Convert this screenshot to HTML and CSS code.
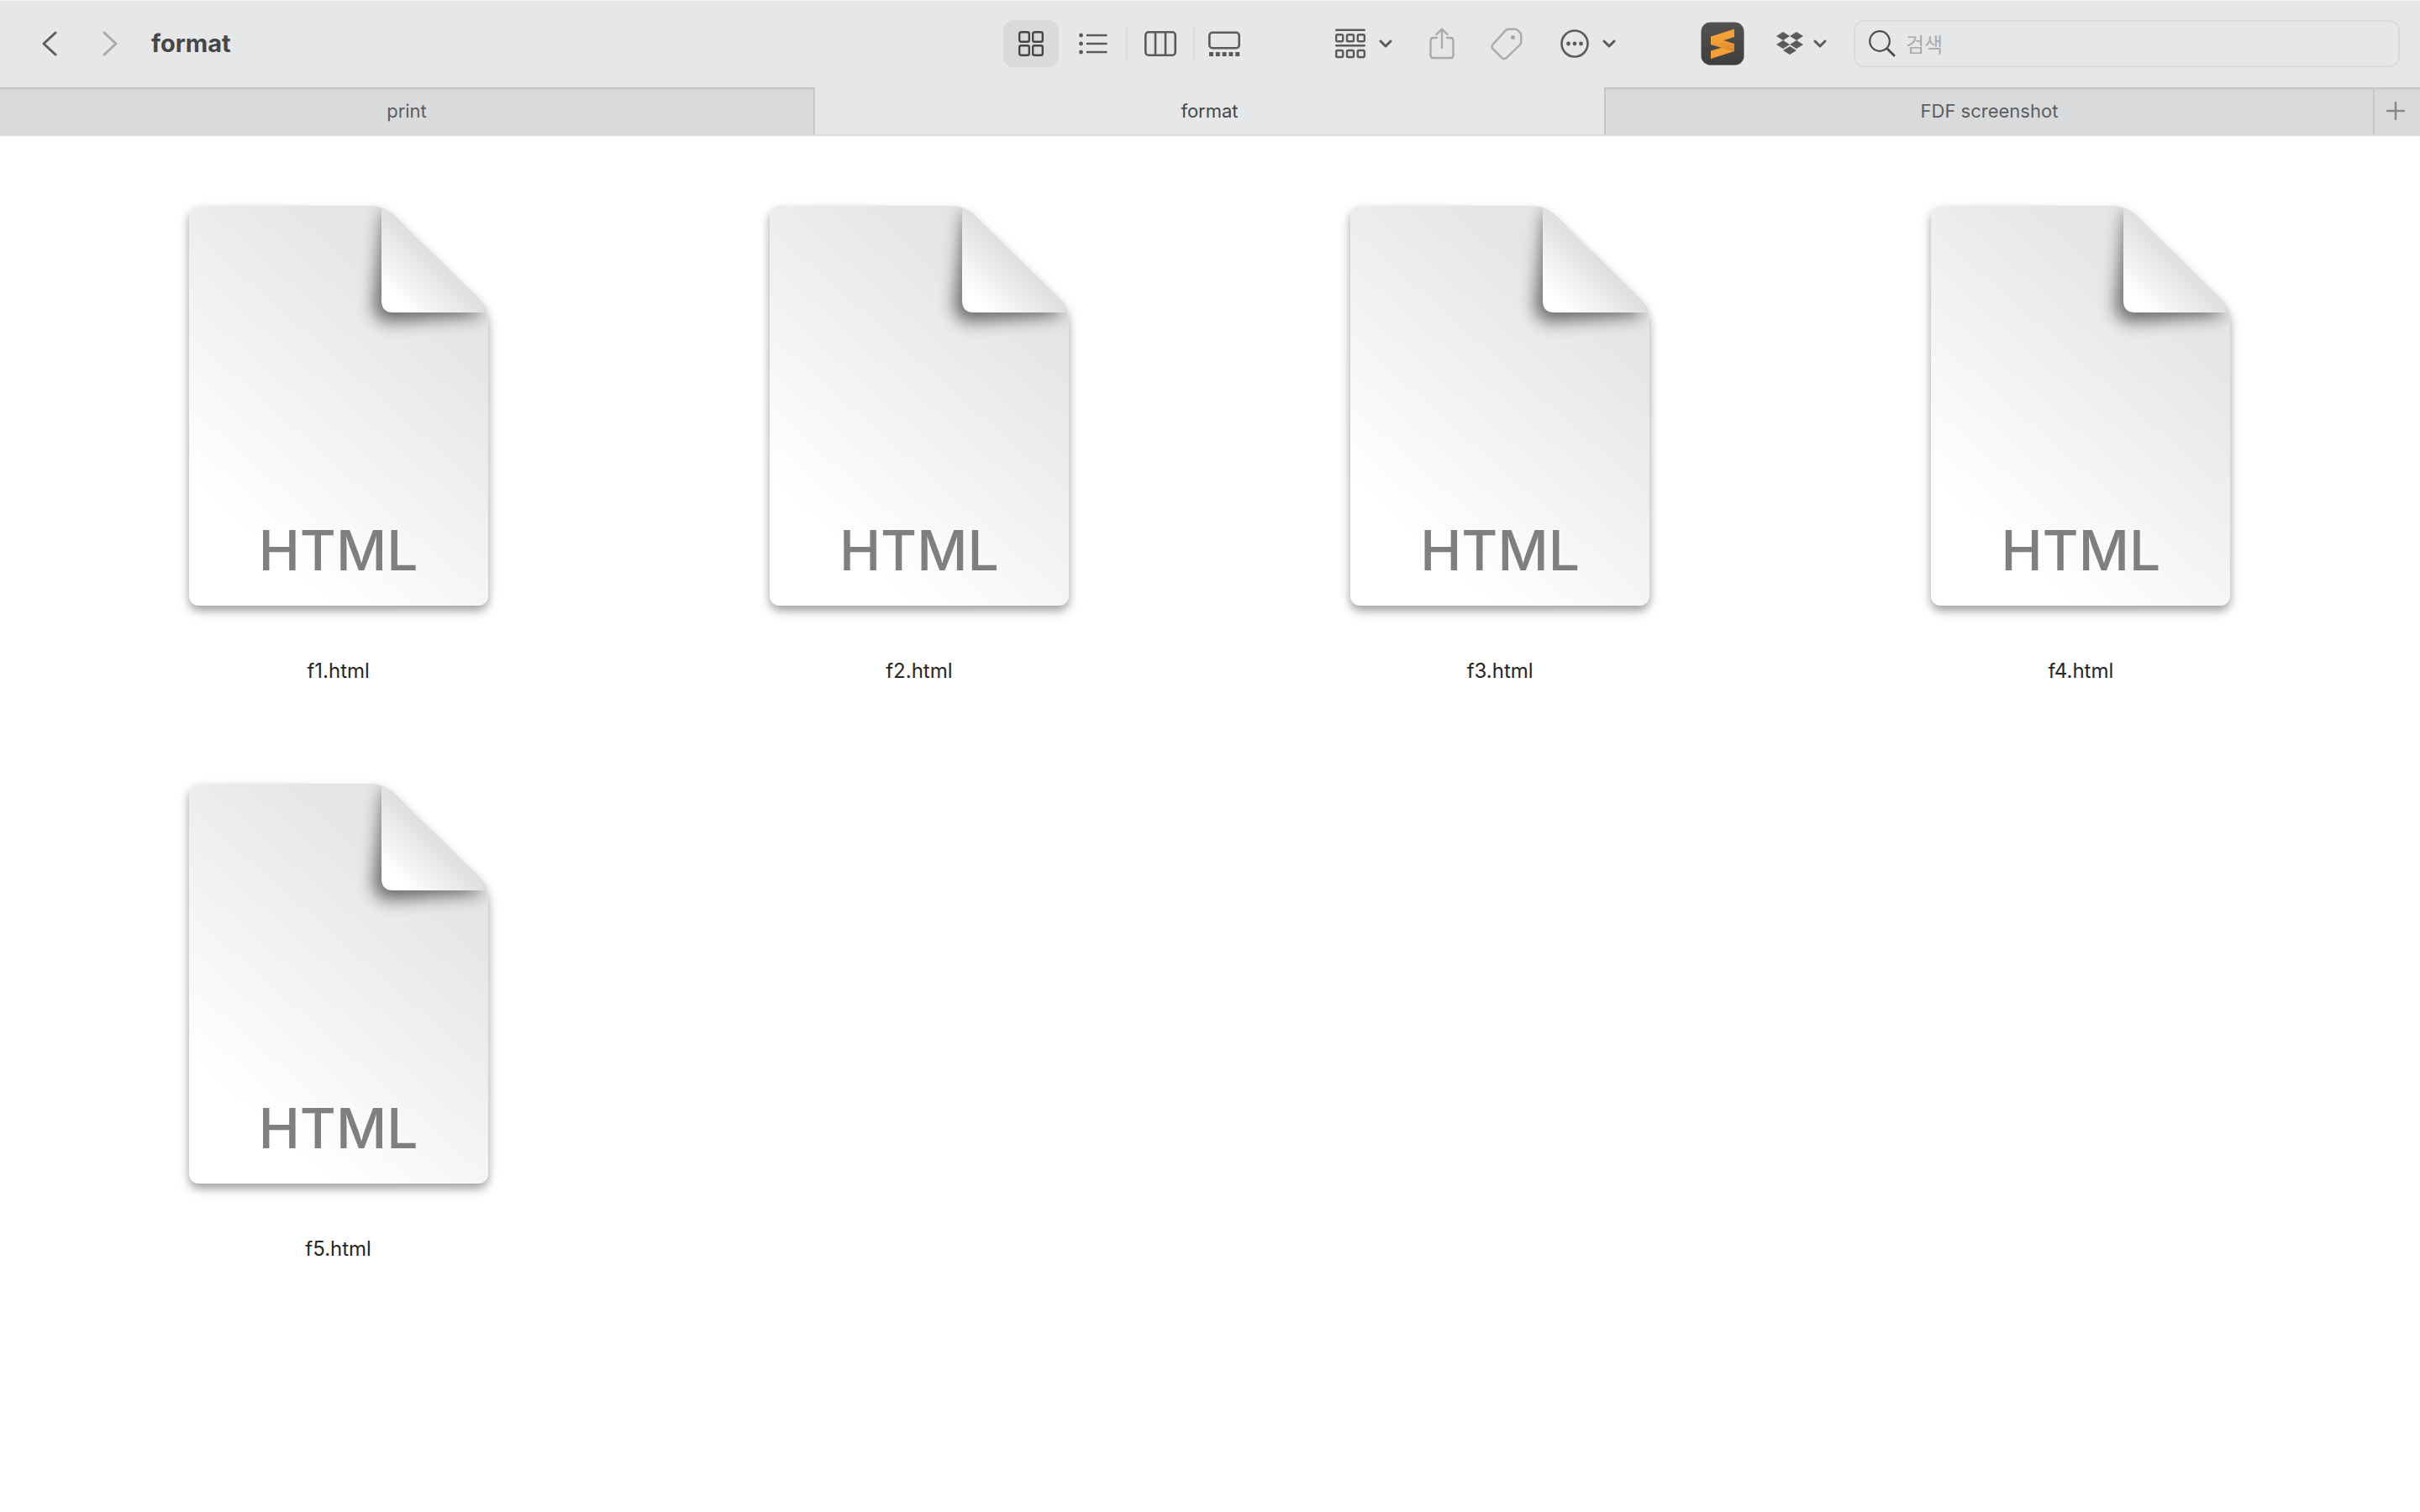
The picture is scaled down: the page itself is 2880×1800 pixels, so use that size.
FILE: index.html
```html
<!DOCTYPE html>
<html lang="ko">
<head>
<meta charset="utf-8">
<title>format</title>
<link rel="stylesheet" href="styles.css">
</head>
<body>
<svg class="defs" aria-hidden="true">
  <defs>
    <linearGradient id="paper" gradientUnits="userSpaceOnUse" x1="60" y1="380" x2="290" y2="120">
      <stop offset="0" stop-color="#fff"/><stop offset="1" stop-color="#e5e5e5"/>
    </linearGradient>
    <linearGradient id="flap" gradientUnits="userSpaceOnUse" x1="245" y1="111" x2="291" y2="65">
      <stop offset="0" stop-color="#fff"/><stop offset="1" stop-color="#e0e0e0"/>
    </linearGradient>
    <filter id="drop" filterUnits="userSpaceOnUse" x="-24" y="-24" width="404" height="540">
      <feDropShadow dx="0" dy="6" stdDeviation="6" flood-color="#000" flood-opacity=".38"/>
    </filter>
    <filter id="soft" filterUnits="userSpaceOnUse" x="150" y="-60" width="280" height="280">
      <feGaussianBlur stdDeviation="10"/>
    </filter>
    <clipPath id="sheet"><path d="M14 0H216Q230 0 241 9L345 111Q356 121 356 138V462Q356 476 342 476H14Q0 476 0 462V14Q0 0 14 0Z"/></clipPath>
    <symbol id="file" viewBox="-24 -24 404 540">
      <path filter="url(#drop)" fill="url(#paper)" d="M14 0H216Q230 0 241 9L345 111Q356 121 356 138V462Q356 476 342 476H14Q0 476 0 462V14Q0 0 14 0Z"/>
      <g clip-path="url(#sheet)">
        <path d="M232 2L220 118Q220 138 240 138L352 130Z" fill="#000" opacity=".55" filter="url(#soft)"/>
        <path d="M229 2Q236 4 241 9L345 111Q351 117 353 127H243Q229 127 229 113Z" fill="url(#flap)"/>
      </g>
    </symbol>
    <symbol id="chevron" viewBox="0 0 16 10"><path d="M2 2L8 8L14 2" fill="none" stroke="currentColor" stroke-width="3" stroke-linecap="round" stroke-linejoin="round"/></symbol>
  </defs>
</svg>

<header class="toolbar">
  <nav class="history">
    <button class="tool" aria-label="뒤로"><svg width="18" height="30" viewBox="0 0 18 30"><path d="M16 2L2 15L16 28" fill="none" stroke="currentColor" stroke-width="3" stroke-linecap="round" stroke-linejoin="round"/></svg></button>
    <button class="tool dim" aria-label="앞으로"><svg width="18" height="30" viewBox="0 0 18 30"><path d="M2 2L16 15L2 28" fill="none" stroke="currentColor" stroke-width="3" stroke-linecap="round" stroke-linejoin="round"/></svg></button>
    <h1 class="title">format</h1>
  </nav>

  <div class="views">
    <button class="tool view selected" aria-label="아이콘"><svg width="32" height="32" viewBox="0 0 32 32" fill="none" stroke="currentColor" stroke-width="2.4"><rect x="2.2" y="2.2" width="11.6" height="11.6" rx="2"/><rect x="18.2" y="2.2" width="11.6" height="11.6" rx="2"/><rect x="2.2" y="18.2" width="11.6" height="11.6" rx="2"/><rect x="18.2" y="18.2" width="11.6" height="11.6" rx="2"/></svg></button>
    <button class="tool view" aria-label="목록"><svg width="34" height="26" viewBox="0 0 34 26" fill="currentColor"><circle cx="2.5" cy="3" r="2.4"/><circle cx="2.5" cy="13" r="2.4"/><circle cx="2.5" cy="23" r="2.4"/><path d="M10 3H32.5M10 13H32.5M10 23H32.5" stroke="currentColor" stroke-width="2.6" stroke-linecap="round"/></svg></button>
    <span class="rule"></span>
    <button class="tool view" aria-label="계층"><svg width="40" height="32" viewBox="0 0 40 32" fill="none" stroke="currentColor" stroke-width="2.6"><rect x="2.3" y="2.3" width="35.4" height="27.4" rx="3.5"/><path d="M14 2V30M26 2V30"/></svg></button>
    <span class="rule"></span>
    <button class="tool view narrow" aria-label="갤러리"><svg width="38" height="30" viewBox="0 0 38 30"><rect x="1.3" y="1.8" width="35.4" height="18.4" rx="3.5" fill="none" stroke="currentColor" stroke-width="2.6"/><path d="M1 27.5H37.200" stroke="currentColor" stroke-width="5" stroke-dasharray="5 2.8"/></svg></button>
  </div>

  <div class="actions">
    <button class="tool" aria-label="그룹"><svg width="36" height="36" viewBox="0 0 36 36" fill="none" stroke="currentColor" stroke-width="2.4"><path d="M1.2 1.7H34.8M1.2 20.3H34.8" stroke-linecap="round"/><rect x="1.2" y="7.2" width="8" height="8" rx="1.5"/><rect x="14" y="7.2" width="8" height="8" rx="1.5"/><rect x="26.8" y="7.2" width="8" height="8" rx="1.5"/><rect x="1.2" y="26" width="8" height="8" rx="1.5"/><rect x="14" y="26" width="8" height="8" rx="1.5"/><rect x="26.8" y="26" width="8" height="8" rx="1.5"/></svg><svg width="16" height="10"><use href="#chevron"/></svg></button>
    <button class="tool dim" aria-label="공유"><svg width="30" height="38" viewBox="0 0 30 38" fill="none" stroke="currentColor" stroke-width="2.4" stroke-linecap="round" stroke-linejoin="round"><path d="M9 12H5Q1.5 12 1.5 15.5V32.5Q1.5 36 5 36H25Q28.5 36 28.5 32.5V15.5Q28.5 12 25 12H21M15 24V2M8.500 8L15 1.5L21.5 8"/></svg></button>
    <button class="tool dim" aria-label="태그"><svg class="tag" width="38" height="38" viewBox="1 0 38 38"><path d="M20.500 1.700H29Q31 1.700 32.500 3.200L35 5.800Q36.300 7.200 36.300 9V17Q36.300 19 34.800 20.500L18.500 36Q16 38 13.500 36L2.500 25Q0.500 22.500 2.500 20L18 3Q19 1.700 20.500 1.700Z" fill="none" stroke="currentColor" stroke-width="2.4"/><circle cx="26.5" cy="11.5" r="2.5" fill="currentColor"/></svg></button>
    <button class="tool" aria-label="동작"><svg width="34" height="34" viewBox="0 0 34 34"><circle cx="17" cy="17" r="15.5" fill="none" stroke="currentColor" stroke-width="2.6"/><g fill="currentColor"><circle cx="9.5" cy="17" r="2.4"/><circle cx="17" cy="17" r="2.4"/><circle cx="24.5" cy="17" r="2.4"/></g></svg><svg width="16" height="10"><use href="#chevron"/></svg></button>
  </div>

  <div class="apps">
    <button class="tool" aria-label="Sublime Text"><svg width="52" height="52" viewBox="0 0 52 52"><defs><linearGradient id="dark" x2="0" y2="1"><stop stop-color="#525252"/><stop offset="1" stop-color="#3e3e3e"/></linearGradient><linearGradient id="fold" x1="0" y1="0" x2=".3" y2="1"><stop offset=".4" stop-color="#f59d35"/><stop offset="1" stop-color="#e08a2b"/></linearGradient></defs><rect x=".5" y=".5" width="51" height="51" rx="11" fill="url(#dark)"/><path d="M12 34.500L40 26V35L12 44Z" fill="#f3a038"/><path d="M12 17.500V27L40 35.500V26Z" fill="url(#fold)"/><path d="M12 17.500L40 8.500V18L12 27Z" fill="#f3a038"/></svg></button>
    <button class="tool" aria-label="Dropbox"><svg width="32" height="28" viewBox="0 0 32 28" fill="currentColor"><path d="M8 0L16 5L8 10L0 5ZM24 0L32 5L24 10L16 5ZM8 10L16 15L8 20L0 15ZM24 10L32 15L24 20L16 15ZM16 17L24 22L16 27L8 22Z"/></svg><svg width="16" height="10"><use href="#chevron"/></svg></button>
  </div>

  <label class="search">
    <svg width="32" height="32" viewBox="0 0 32 32" fill="none" stroke="currentColor" stroke-linecap="round"><circle cx="13" cy="13" r="11.8" stroke-width="2.2"/><path d="M22 22L30 30" stroke-width="3"/></svg>
    <input type="search" placeholder="검색" aria-label="검색">
  </label>
</header>

<nav class="tabs">
  <button class="tab first">print</button>
  <button class="tab active">format</button>
  <button class="tab last">FDF screenshot</button>
  <button class="add" aria-label="새로운 탭"><svg width="22" height="22" viewBox="0 0 22 22"><path d="M11 1V21M1 11H21" stroke="currentColor" stroke-width="2.4" stroke-linecap="round"/></svg></button>
</nav>

<main class="files">
  <figure class="file"><div class="page"><svg class="sheet" width="404" height="540"><use href="#file"/></svg><span class="kind">HTML</span></div><figcaption>f1.html</figcaption></figure>
  <figure class="file"><div class="page"><svg class="sheet" width="404" height="540"><use href="#file"/></svg><span class="kind">HTML</span></div><figcaption>f2.html</figcaption></figure>
  <figure class="file"><div class="page"><svg class="sheet" width="404" height="540"><use href="#file"/></svg><span class="kind">HTML</span></div><figcaption>f3.html</figcaption></figure>
  <figure class="file"><div class="page"><svg class="sheet" width="404" height="540"><use href="#file"/></svg><span class="kind">HTML</span></div><figcaption>f4.html</figcaption></figure>
  <figure class="file"><div class="page"><svg class="sheet" width="404" height="540"><use href="#file"/></svg><span class="kind">HTML</span></div><figcaption>f5.html</figcaption></figure>
</main>
</body>
</html>
```
FILE: styles.css
```css
* { box-sizing: border-box; }

body {
  margin: 0;
  background: #fff;
  color: #262626;
  font-family: Inter, "Noto Sans CJK KR", sans-serif;
}

svg { display: block; flex: none; }
.defs { position: absolute; width: 0; height: 0; }

button {
  margin: 0;
  padding: 0;
  border: 0;
  background: none;
  font: inherit;
  color: inherit;
}

.toolbar {
  display: grid;
  grid-template-columns: 1194px 395px auto auto 1fr;
  align-items: center;
  height: 104px;
  padding: 0 24px 2px 0;
  border-top: 1px solid #f4f5f5;
  background: #e6e7e9;
  color: #5a5b5d;
}

.tool { display: flex; align-items: center; gap: 16px; }
.dim { color: #a9aaac; }
.tag { overflow: visible; }

.history { display: flex; align-items: center; padding-left: 50px; gap: 54px; }
.title { margin: 0 0 0 -14px; font-size: 29px; line-height: 40px; font-weight: 700; color: #454647; }

.views { display: flex; align-items: center; }
.view { justify-content: center; width: 66px; height: 56px; border-radius: 12px; }
.view + .view { margin-left: 8px; }
.narrow { width: 58px; }
.selected { background: #d9dadc; color: #454647; }
.rule { width: 2px; height: 40px; margin: 0 6px; background: #d9dadc; }

.actions { display: flex; align-items: center; gap: 44px; }
.apps { display: flex; align-items: center; gap: 38px; margin-left: 101px; }
.apps .tool { gap: 12px; }

.search {
  display: flex;
  align-items: center;
  gap: 12px;
  height: 56px;
  margin-left: 32px;
  padding: 0 16px;
  border: 2px solid #d9dadc;
  border-radius: 12px;
  color: #4d4e50;
}
.search input {
  flex: 1;
  min-width: 0;
  padding: 4px 0 0;
  border: 0;
  outline: 0;
  background: none;
  font: inherit;
  font-size: 24px;
  line-height: 32px;
}
.search input::placeholder { color: #a9aaac; opacity: 1; }

.tabs { display: flex; height: 58px; border-bottom: 2px solid #dcdddf; background: #e6e7e9; }
.tab, .add {
  background: linear-gradient(#b6b7b8, #cfd0d1 2px, #d9dadc 5px);
  color: #5c5d5f;
}
.tab { flex: 940 1 0; font-size: 22px; line-height: 28px; }
.first { flex-grow: 969; border-right: 2px solid #c6c7c9; }
.active { background: none; color: #454647; }
.last { flex-grow: 914; border-left: 2px solid #c6c7c9; }
.add { display: grid; place-items: center; width: 56px; padding-right: 4px; border-left: 2px solid #c6c7c9; color: #858688; }

.files {
  display: grid;
  grid-template-columns: repeat(4, 1fr);
  row-gap: 94px;
  padding: 59px 58px 0 57px;
}
.file { display: flex; flex-direction: column; align-items: center; margin: 0; }
.page { display: grid; justify-items: center; align-items: end; }
.sheet, .kind { grid-area: 1 / 1; }
.kind {
  padding-bottom: 64px;
  font-size: 66px;
  line-height: 84px;
  font-weight: 500;
  color: #7f7f7f;
  text-shadow: 0 0 6px #fff;
}
figcaption { margin-top: 22px; font-size: 24px; line-height: 32px; }
```
